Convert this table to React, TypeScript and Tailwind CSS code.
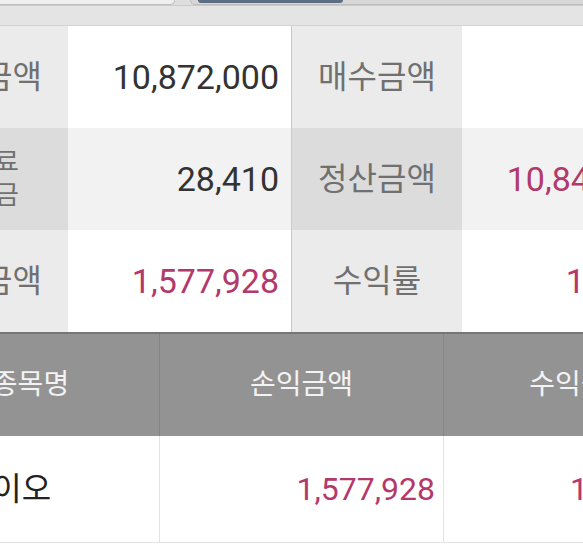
import React from "react";

const PINK = "text-[#b3396c]";

function LabelCell({ children, dark }: { children: React.ReactNode; dark?: boolean }) {
  return (
    <div
      className={`flex items-center justify-center text-[32px] leading-none text-[#707070] ${
        dark ? "bg-[#dcdcdc]" : "bg-[#ebebeb]"
      }`}
    >
      {children}
    </div>
  );
}

function ValueCell({ children, shade, pink }: { children?: React.ReactNode; shade?: boolean; pink?: boolean }) {
  return (
    <div
      className={`flex items-center justify-end pr-[12px] text-[34px] leading-none ${
        pink ? PINK : "text-[#333333]"
      } ${shade ? "bg-[#f2f2f2]" : "bg-white"}`}
    >
      {children}
    </div>
  );
}

function Sep() {
  return <div className="bg-[#c9c9c9]" />;
}

export default function App() {
  return (
    <div className="w-[583px] h-[546px] overflow-hidden bg-white font-['Roboto','Noto_Sans_CJK_KR',sans-serif]">
      {/* top strip */}
      <div className="flex h-[5px] bg-[#dedede]">
        <div className="w-[175px] shrink-0 bg-[#efefef] border-b border-r border-[#bdbdbd] rounded-br-[6px]" />
        <div className="ml-[15px] flex-1 bg-[#d7d7d7] border-b border-l border-[#bdbdbd] rounded-bl-[6px]">
          <div className="ml-[7px] w-[145px] h-[3px] bg-[#5d6d83] rounded-b-[3px]" />
        </div>
      </div>
      <div className="h-[21px] bg-[#e4e4e4] border-t border-t-[#cbcbcb] border-b border-b-[#d2d2d2]" />

      {/* summary table */}
      <div className="ml-[-102px] grid grid-cols-[170px_223px_1px_170px_223px] grid-rows-[102px_102px_102px] w-[687px]">
        <LabelCell>매입금액</LabelCell>
        <ValueCell>10,872,000</ValueCell>
        <Sep />
        <LabelCell>매수금액</LabelCell>
        <ValueCell />

        <LabelCell dark>
          <div className="text-center text-[26px] leading-[33px]">
            수수료
            <br />
            제세금
          </div>
        </LabelCell>
        <ValueCell shade>28,410</ValueCell>
        <Sep />
        <LabelCell dark>정산금액</LabelCell>
        <ValueCell shade pink>
          10,843,590
        </ValueCell>

        <LabelCell>손익금액</LabelCell>
        <ValueCell pink>1,577,928</ValueCell>
        <Sep />
        <LabelCell>수익률</LabelCell>
        <ValueCell pink>
          <span className="mr-[-3px]">15.35%</span>
        </ValueCell>
      </div>

      {/* list table */}
      <div className="h-[2px] bg-[#767676]" />
      <div className="ml-[-108px] grid grid-cols-[267px_1px_283px_1px_248px] h-[102px] w-[800px] bg-[#939393] text-[#f3f3f3] text-[28px] leading-none">
        <div className="flex items-center justify-center pl-[10px]">종목명</div>
        <div className="bg-[#858585]" />
        <div className="flex items-center justify-center">손익금액</div>
        <div className="bg-[#858585]" />
        <div className="flex items-center justify-center">수익률</div>
      </div>
      <div className="ml-[-108px] grid grid-cols-[267px_1px_283px_1px_248px] h-[107px] w-[800px] bg-white border-b border-[#e2e2e2] leading-none">
        <div className="flex items-center pl-[12px] text-[32px] text-[#222222]">삼성바이오</div>
        <div className="bg-[#e3e3e3]" />
        <div className={`flex items-center justify-end pr-[8px] text-[32px] ${PINK}`}>1,577,928</div>
        <div className="bg-[#e3e3e3]" />
        <div className={`flex items-center pl-[126px] text-[32px] ${PINK}`}>15.35%</div>
      </div>
    </div>
  );
}
